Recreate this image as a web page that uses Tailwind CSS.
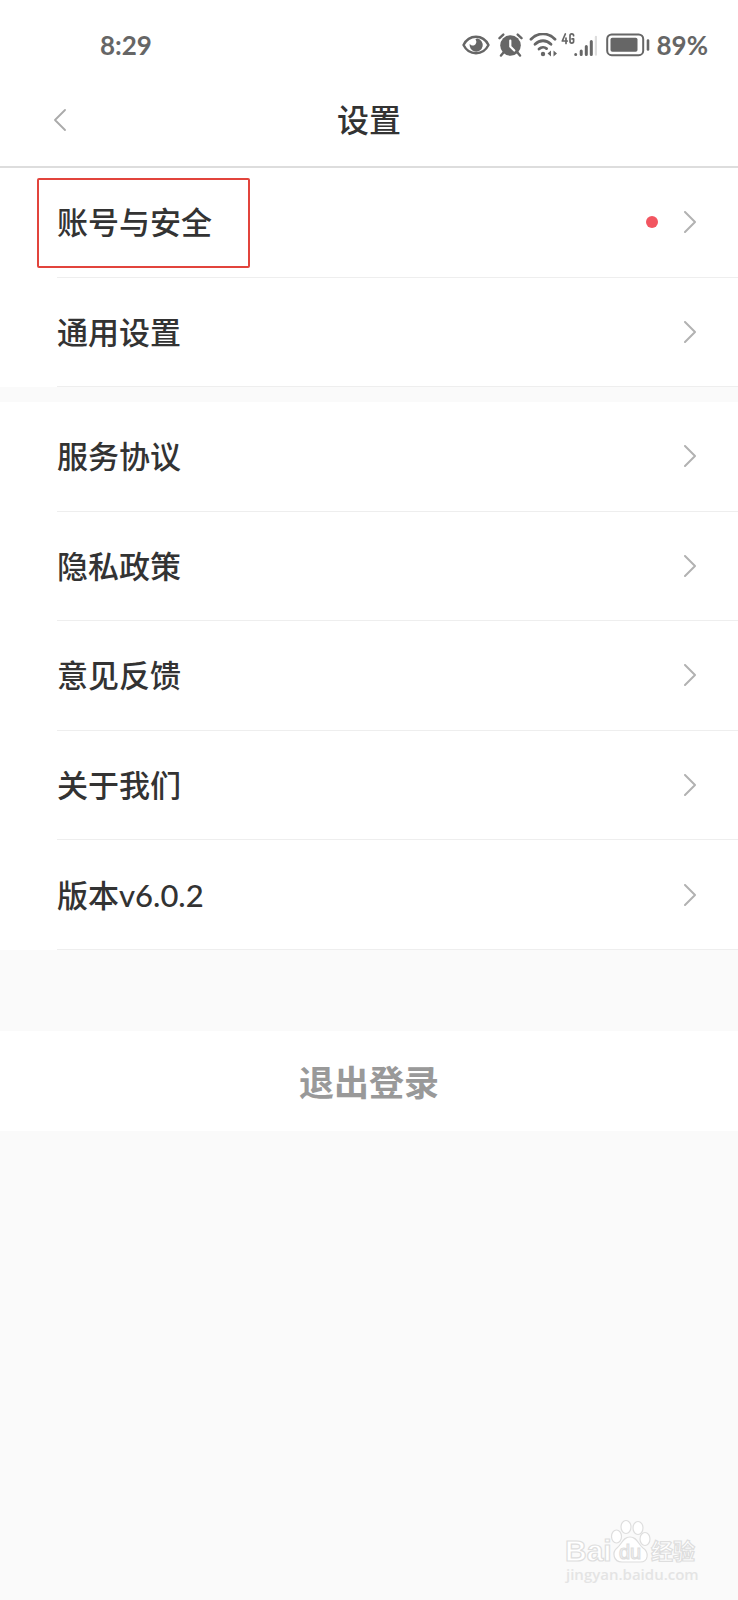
<!DOCTYPE html>
<html lang="zh-CN">
<head>
  <meta charset="UTF-8">
  <meta name="viewport" content="width=device-width, initial-scale=1">
  <title>设置</title>
  <script src="https://cdn.jsdelivr.net/npm/@tailwindcss/browser@4"></script>
</head>
<body class="min-h-screen flex flex-col bg-[#fafafa] text-[#333] font-['Lato','Noto_Sans_CJK_SC',sans-serif]">

  <!-- status bar -->
  <div class="flex items-center justify-between h-[90px] pl-[100px] pr-[30px] bg-white text-[#666] text-[26px] leading-none font-bold">
    <span>8:29</span>
    <div class="flex items-center">
      <svg class="w-7 h-6 mr-2" viewBox="0 0 28 24" fill="none">
        <path d="M1.5 12C7 1 21 1 26.5 12C21 23 7 23 1.5 12Z" stroke="#666" stroke-width="2.4" stroke-linejoin="round"/>
        <path d="M15.500 5.600a6.600 6.600 0 1 1-7.800 5.200c.9 1.700 3 2.300 4.600 1.400c2-1 2.700-3.500 1.400-5.400c-.3-.5-.2-.9 1.800-1.200Z" fill="#666"/>
      </svg>
      <svg class="w-[25px] h-6 mr-[6px]" viewBox="0 0 25 24" fill="none" stroke="#666" stroke-linecap="round">
        <circle cx="12.500" cy="12.500" r="10.300" fill="#666" stroke="none"/>
        <path d="M1.500 5.200L5.300 1.600M23.500 5.200L19.700 1.600" stroke-width="2.400"/>
        <path d="M5.500 19.500L3 22.600M19.500 19.500L22 22.600" stroke-width="2.400"/>
        <path d="M12.300 7.500V13.500L16.300 17.500" stroke="#fff" stroke-width="2.200"/>
      </svg>
      <svg class="w-7 h-6 mr-1" viewBox="0 0 28 24" fill="none" stroke="#666" stroke-width="2.800" stroke-linecap="round">
        <path d="M2 6.200C9 -.8 19 -.8 26 6.200"/>
        <path d="M6 11.200C10.800 6.600 17.200 6.600 22 11.200"/>
        <path d="M10 16C12.400 13.800 15.600 13.800 17.600 15.600"/>
        <circle cx="14" cy="21" r="2.200" fill="#666" stroke="none"/>
        <path d="M18.500 20.500l3.500-3v6zM28 20.500l-3.500-3v6z" fill="#666" stroke="none"/>
      </svg>
      <svg class="w-9 h-6 mr-[9px]" viewBox="0 0 36 24" fill="none" stroke="#666" stroke-width="3" stroke-linecap="round">
        <g stroke-width="1.700" stroke-linejoin="round">
          <path d="M4.300 1L1.300 8H6.300M5 5V10.500"/>
          <path d="M12.600 2.700C12.600 .3 9 .3 9 2.700V8.300C9 10.700 12.600 10.700 12.600 8.300V5.900H11"/>
        </g>
        <path d="M14.700 21.600V21.500M20.200 21.500V18M25.300 21.500V13.500M30.300 21.500V8.500"/>
        <path d="M35 21.500V4" stroke="#ddd" stroke-width="2.400"/>
      </svg>
      <svg class="w-[44px] h-6 mr-[7px]" viewBox="0 0 44 24" fill="none">
        <rect x="1.200" y="1.400" width="36" height="20.800" rx="4.500" stroke="#666" stroke-width="2"/>
        <rect x="4.500" y="4.800" width="27" height="14" rx="1.800" fill="#666"/>
        <path d="M42 7.500V16.500" stroke="#666" stroke-width="2.600" stroke-linecap="round"/>
      </svg>
      <span>89%</span>
    </div>
  </div>

  <header class="grid grid-cols-[1fr_auto_1fr] items-center h-[78px] px-[54px] pb-4 bg-white border-b-2 border-[#ddd]">
    <button type="button" aria-label="返回">
      <svg class="w-3 h-[22px]" viewBox="0 0 12 22" fill="none" stroke="#aaa" stroke-width="1.800" stroke-linecap="round" stroke-linejoin="round"><path d="M11 1L1 11L11 21"/></svg>
    </button>
    <h1 class="text-[32px] leading-10 font-medium">设置</h1>
  </header>

  <main class="text-[31px] leading-10 font-medium">
    <nav class="grid auto-rows-fr h-[219px] pl-[57px] bg-white">
      <a href="#" class="relative flex items-center pr-[42px] border-b border-[#eee]">
        <span class="absolute -left-5 top-[10px] w-[213px] h-[90px] border-2 border-[#e2443c] rounded-xs"></span>
        <span class="flex-1">账号与安全</span>
        <span class="size-3 mr-[26px] rounded-full bg-[#f25560]"></span>
        <svg class="w-3 h-[22px]" viewBox="0 0 12 22" fill="none" stroke="#b2b2b2" stroke-width="2" stroke-linecap="round" stroke-linejoin="round"><path d="M1 1L11 11L1 21"/></svg>
      </a>
      <a href="#" class="flex items-center pr-[42px] border-b border-[#eee]">
        <span class="flex-1">通用设置</span>
        <svg class="w-3 h-[22px]" viewBox="0 0 12 22" fill="none" stroke="#b2b2b2" stroke-width="2" stroke-linecap="round" stroke-linejoin="round"><path d="M1 1L11 11L1 21"/></svg>
      </a>
    </nav>

    <nav class="grid auto-rows-fr h-[548px] mt-[15px] pl-[57px] bg-white">
      <a href="#" class="flex items-center pr-[42px] border-b border-[#eee]">
        <span class="flex-1">服务协议</span>
        <svg class="w-3 h-[22px]" viewBox="0 0 12 22" fill="none" stroke="#b2b2b2" stroke-width="2" stroke-linecap="round" stroke-linejoin="round"><path d="M1 1L11 11L1 21"/></svg>
      </a>
      <a href="#" class="flex items-center pr-[42px] border-b border-[#eee]">
        <span class="flex-1">隐私政策</span>
        <svg class="w-3 h-[22px]" viewBox="0 0 12 22" fill="none" stroke="#b2b2b2" stroke-width="2" stroke-linecap="round" stroke-linejoin="round"><path d="M1 1L11 11L1 21"/></svg>
      </a>
      <a href="#" class="flex items-center pr-[42px] border-b border-[#eee]">
        <span class="flex-1">意见反馈</span>
        <svg class="w-3 h-[22px]" viewBox="0 0 12 22" fill="none" stroke="#b2b2b2" stroke-width="2" stroke-linecap="round" stroke-linejoin="round"><path d="M1 1L11 11L1 21"/></svg>
      </a>
      <a href="#" class="flex items-center pr-[42px] border-b border-[#eee]">
        <span class="flex-1">关于我们</span>
        <svg class="w-3 h-[22px]" viewBox="0 0 12 22" fill="none" stroke="#b2b2b2" stroke-width="2" stroke-linecap="round" stroke-linejoin="round"><path d="M1 1L11 11L1 21"/></svg>
      </a>
      <a href="#" class="flex items-center pr-[42px] border-b border-[#eee]">
        <span class="flex-1">版本v6.0.2</span>
        <svg class="w-3 h-[22px]" viewBox="0 0 12 22" fill="none" stroke="#b2b2b2" stroke-width="2" stroke-linecap="round" stroke-linejoin="round"><path d="M1 1L11 11L1 21"/></svg>
      </a>
    </nav>

    <button type="button" class="block w-full h-[100px] mt-[81px] pt-[2px] bg-white text-[35px] font-bold text-[#999]">退出登录</button>
  </main>

  <!-- watermark -->
  <footer class="mt-auto self-end mr-10 mb-4 w-[132px] text-[#e4e4e4]">
    <svg class="w-[132px] h-[46px] overflow-visible" viewBox="0 0 132 46" fill="#fff" stroke="#dedede" stroke-width="1.200">
      <text x="-1" y="43" font-family="Liberation Sans" font-weight="bold" font-size="30">Bai</text>
      <ellipse cx="50.500" cy="18.500" rx="5" ry="6.500"/>
      <ellipse cx="60" cy="9" rx="5" ry="6.500"/>
      <ellipse cx="72" cy="10" rx="5" ry="6.500"/>
      <ellipse cx="79" cy="21" rx="5" ry="6.500"/>
      <path d="M64 19C57 19 56 26 51 30C46 34 47 44 56 44H74C83 44 83 34 77 30C72 26 71 19 64 19Z"/>
      <text x="53" y="41" font-family="Liberation Sans" font-size="20">du</text>
      <text x="85" y="41" font-family="Noto Sans CJK SC" font-weight="bold" font-size="22">经验</text>
    </svg>
    <p class="text-[15px] leading-5 font-semibold whitespace-nowrap font-['Open_Sans']">jingyan.baidu.com</p>
  </footer>

</body>
</html>
